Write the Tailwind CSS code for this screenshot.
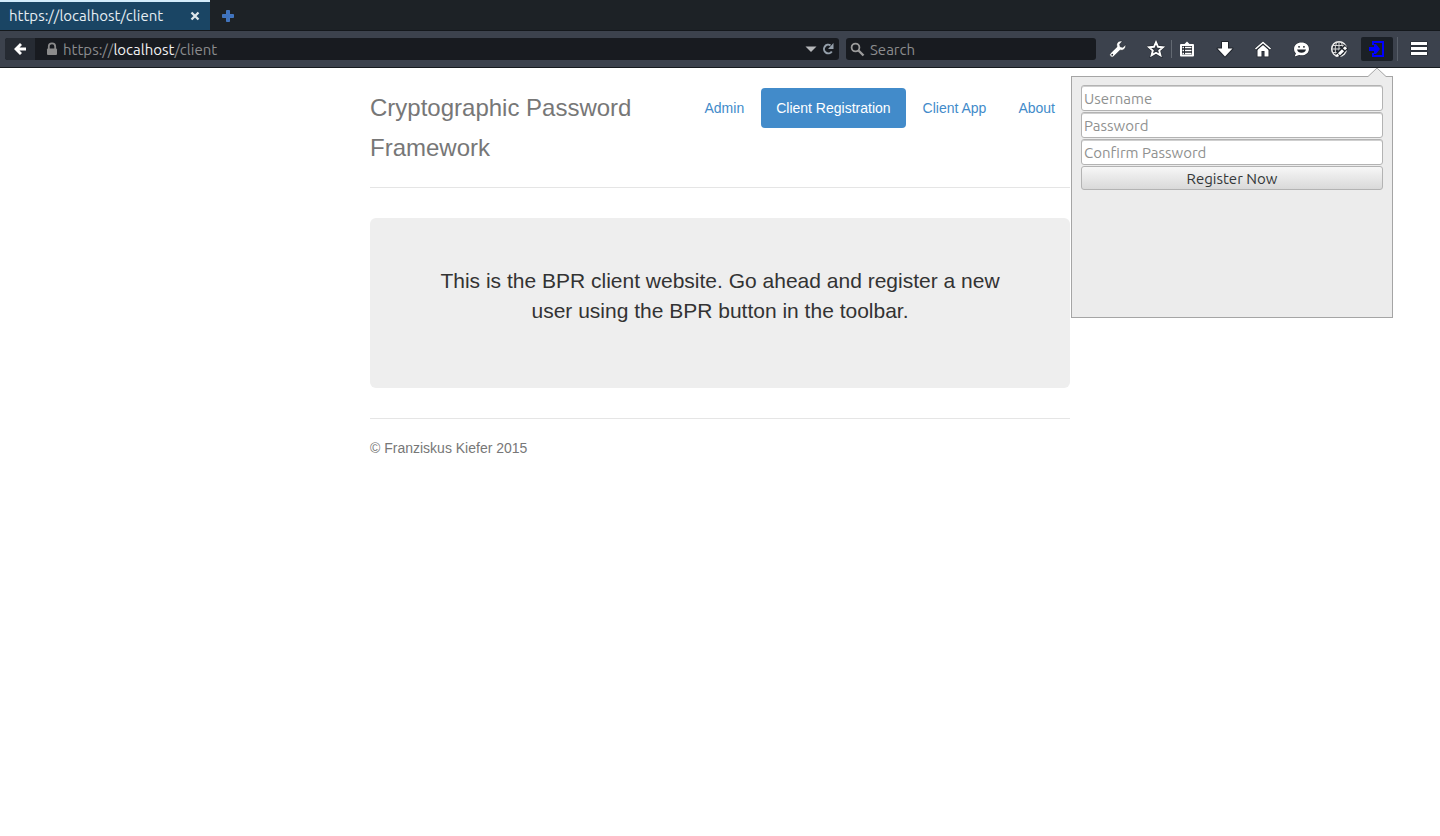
<!DOCTYPE html>
<html lang="en">
<head>
<meta charset="utf-8">
<meta name="viewport" content="width=device-width, initial-scale=1">
<title>Cryptographic Password Framework</title>
<script src="https://cdn.jsdelivr.net/npm/@tailwindcss/browser@4"></script>
</head>
<body class="min-h-screen bg-white font-['Liberation_Sans',Arial,sans-serif] text-sm text-[#333333]">
<div class="relative font-['Ubuntu','Noto_Sans',sans-serif] text-[15px]">
  <!-- Tab strip -->
  <div class="flex h-[31px] border-b border-[#14181c] bg-[#1d2226]">
    <div class="flex w-[210px] items-center justify-between border-t-2 border-[#d3ecfb] bg-[#1a4564] pr-[7px] pl-[9px] text-[#e6eef3]">
      <span>https://localhost/client</span>
      <button aria-label="Close tab" class="flex size-4 items-center justify-center">
        <svg class="size-3" viewBox="0 0 12 12"><path d="M2.500 2.500L9.500 9.500M9.500 2.500L2.500 9.500" stroke="#dce5ea" stroke-width="2.300"/></svg>
      </button>
    </div>
    <button aria-label="New tab" class="flex w-9 items-center justify-center pt-px">
      <svg class="size-4" viewBox="0 0 16 16"><path d="M6.500 2.500h3v4h4v3h-4v4h-3v-4h-4v-3h4z" fill="#3d73c0" stroke="#4a82d0" stroke-width=".8"/></svg>
    </button>
  </div>
  <!-- Navigation bar -->
  <div class="flex h-[37px] items-center border-b border-[#171b1f] bg-[#3c424d] pl-[5px]">
    <div class="flex h-[22px] min-w-0 grow items-center overflow-hidden rounded-[3px] bg-[#181b20]">
      <button aria-label="Back" class="flex h-full w-[30px] shrink-0 items-center justify-center bg-[#262b33]">
        <svg class="size-4" viewBox="0 0 16 16"><path d="M2 8l6-6 2 2-2.500 2.500H14v3H7.500L10 12l-2 2z" fill="#fff"/></svg>
      </button>
      <svg class="mr-1 ml-[10px] size-[14px] shrink-0" viewBox="0 0 14 14"><path d="M3.800 7V4.500a3.200 3.200 0 0 1 6.400 0V7" fill="none" stroke="#8b8b8b" stroke-width="1.800"/><rect x="2" y="6.500" width="10" height="6.500" rx="1" fill="#8b8b8b"/></svg>
      <div class="grow pt-0.5 text-[#8b8c8e]">https://<span class="text-[#f2f2f2]">localhost</span>/client</div>
      <button aria-label="Show history" class="flex w-[14px] justify-center"><svg class="h-[6px] w-3" viewBox="0 0 12 6"><path d="M.500 .500h11L6 6z" fill="#b6b8ba"/></svg></button>
      <button aria-label="Reload" class="mr-1 ml-[3px]"><svg class="size-[14px]" viewBox="0 0 14 14"><path d="M9.500 3.300A4.300 4.300 0 1 0 10.800 9.500" fill="none" stroke="#95a0ab" stroke-width="2"/><path d="M12.500 1v6H7z" fill="#95a0ab"/></svg></button>
    </div>
    <label class="ml-[7px] flex h-[22px] w-[250px] shrink-0 items-center rounded-[3px] bg-[#181b20] pl-1">
      <svg class="mr-[5px] size-[15px] shrink-0" viewBox="0 0 15 15" fill="none" stroke="#9b9b9b"><circle cx="5.500" cy="5.500" r="3.900" stroke-width="1.800"/><path d="M8.500 8.500l5 5" stroke-width="2.400"/></svg>
      <input type="search" aria-label="Search" placeholder="Search" class="w-full bg-transparent pt-0.5 text-white outline-none placeholder:text-[#8b8c8e]">
    </label>
    <div class="ml-[3px] flex h-6 shrink-0 items-center">
      <button aria-label="Developer tools" class="flex w-[38px] justify-center"><svg class="size-[18px]" viewBox="0 0 16 16"><path d="M14.800 4.200L12.300 6.500 10 6l-.500-2.300L11.800 1.200C9.500.300 7 1.700 6.800 4.200c0 .700.100 1.300.300 1.800L1.300 11.700a1.900 1.900 0 0 0 2.900 2.900L9.900 9c2.800.900 5.600-1.800 4.900-4.800z" fill="#fff" stroke="#20252c" stroke-width=".6"/><circle cx="2.900" cy="13" r=".8" fill="#20252c"/></svg></button>
      <button aria-label="Bookmark this page" class="ml-1 flex w-[30px] justify-center"><svg class="size-[18px]" viewBox="0 0 18 18"><path d="M9 2.200l2 4.600 5 .400-3.800 3.300 1.200 4.900L9 12.800l-4.400 2.600 1.200-4.900L2 7.200l5-.400z" fill="none" stroke="#20252c" stroke-width="3"/><path d="M9 2.200l2 4.600 5 .400-3.800 3.300 1.200 4.900L9 12.800l-4.400 2.600 1.200-4.900L2 7.200l5-.400z" fill="none" stroke="#fff" stroke-width="1.900"/></svg></button>
      <span class="h-[18px] w-px bg-[#636972]"></span>
      <button aria-label="Bookmarks" class="flex w-[30px] justify-center"><svg class="size-4" viewBox="0 0 16 16"><path d="M1 4a1 1 0 0 1 1-1h3.500L8 .500 10.500 3H14a1 1 0 0 1 1 1v10.500a1 1 0 0 1-1 1H2a1 1 0 0 1-1-1z" fill="#fff"/><path d="M3 5h10v8.500H3z" fill="#20252c"/><path d="M3.500 6.500h1.500M6 6.500h6.500M3.500 9.500h1.500M6 9.500h6.500M3.500 12.500h1.500M6 12.500h6.500" stroke="#fff" stroke-width="1.400"/></svg></button>
      <button aria-label="Downloads" class="ml-1 flex w-[38px] justify-center"><svg class="size-[18px]" viewBox="0 0 18 18"><path d="M6 2h6v6.500h4.500L9 16.500 1.500 8.500H6z" fill="#fff" stroke="#20252c" stroke-width="2" stroke-linejoin="round" paint-order="stroke"/></svg></button>
      <button aria-label="Home" class="flex w-[38px] justify-center"><svg class="size-[18px]" viewBox="0 0 18 18"><path d="M3.500 9L9 4.500 14.500 9v7.500h-4V11h-3v5.500h-4z" fill="#fff" stroke="#20252c" stroke-width="1.500" paint-order="stroke"/><path d="M1.500 9.500L9 3l7.500 6.500" fill="none" stroke="#20252c" stroke-width="3"/><path d="M1.500 9L9 2.500 16.500 9" fill="none" stroke="#fff" stroke-width="1.600"/></svg></button>
      <button aria-label="Hello" class="flex w-[38px] justify-center"><svg class="size-[17px]" viewBox="0 0 16 16"><path d="M8 1.500c4 0 7 2.400 7 6s-3 6-7 6c-.800 0-1.500-.100-2.200-.300L1.500 14.500l1.300-3C1.600 10.500 1 9.200 1 7.500c0-3.600 3-6 7-6z" fill="#fff" stroke="#20252c" stroke-width="1" paint-order="stroke"/><circle cx="5.700" cy="5.500" r=".9" fill="#20252c"/><circle cx="10.300" cy="5.500" r=".9" fill="#20252c"/><path d="M3.800 8h8.400c-.500 2-2 3-4.200 3S4.300 10 3.800 8z" fill="#20252c"/></svg></button>
      <button aria-label="Web editor" class="flex w-[38px] justify-center"><svg class="size-[18px]" viewBox="0 0 18 18" fill="none"><circle cx="9" cy="9" r="7.300" fill="#272c34" stroke="#f0f0f0" stroke-width="1.500"/><path d="M9 1.500v15M1.500 9h15M2.500 5.500h13M2.500 12.500h13" stroke="#d8d8d8"/><ellipse cx="9" cy="9" rx="3.800" ry="7.500" stroke="#d8d8d8"/><path d="M7.500 15.500l9-9" stroke="#20252c" stroke-width="5.500"/><path d="M9 14.200L13 10.200M14 9.200l2-2" stroke="#fff" stroke-width="3"/><path d="M5.500 17l1.700-3.500 2 2z" fill="#fff"/></svg></button>
      <button aria-label="BPR" class="ml-[3px] flex h-6 w-8 items-center justify-center rounded-[2px] bg-[#1b2026]"><svg class="size-4" viewBox="0 0 16 16"><path d="M3 4V0h12v16H3v-4h2v2h8V2H5v2z" fill="#00f"/><path d="M0 6h5V3h2l4 5-4 5H5v-3H0z" fill="#00f"/></svg></button>
      <span class="ml-1 h-6 w-px bg-[#59606a]"></span>
      <button aria-label="Open menu" class="flex w-[42px] justify-center"><svg class="size-[18px]" viewBox="0 0 18 18"><path d="M1 2h16v3H1zm0 5h16v3H1zm0 5h16v3H1z" fill="#fff" stroke="#20252c" stroke-width="1.200" stroke-linejoin="round" paint-order="stroke"/></svg></button>
    </div>
  </div>
  <!-- Registration popup -->
  <form class="absolute top-[76px] right-[47px] h-[242px] w-[322px] border border-[#a5a5a5] bg-[#ececec] px-[9px] pt-2">
    <svg class="absolute -top-[10px] right-[5px] h-[10px] w-5" viewBox="0 0 20 10"><path d="M0 10L10 1l10 9z" fill="#ececec"/><path d="M0 9.500h1L10 1l9 8.500h1" fill="none" stroke="#a5a5a5"/></svg>
    <div class="flex flex-col gap-px">
      <input type="text" aria-label="Username" placeholder="Username" class="h-[26px] rounded-[3px] border border-[#b3b3b3] bg-white px-0.5 shadow-[inset_0_1px_0_#cfcfcf] outline-none placeholder:text-[#8f9190]">
      <input type="password" aria-label="Password" placeholder="Password" class="h-[26px] rounded-[3px] border border-[#b3b3b3] bg-white px-0.5 shadow-[inset_0_1px_0_#cfcfcf] outline-none placeholder:text-[#8f9190]">
      <input type="password" aria-label="Confirm Password" placeholder="Confirm Password" class="h-[26px] rounded-[3px] border border-[#b3b3b3] bg-white px-0.5 shadow-[inset_0_1px_0_#cfcfcf] outline-none placeholder:text-[#8f9190]">
      <button type="button" class="flex h-6 items-center justify-center rounded-[3px] border border-[#b3b3b3] bg-linear-to-b from-[#f7f7f7] to-[#d9d9d9] pt-0.5 text-[#333738]">Register Now</button>
    </div>
  </form>
</div>
<!-- Page content -->
<div class="mx-auto max-w-[700px] pt-5">
  <header class="mb-[30px] flex items-start justify-between border-b border-[#e5e5e5] pb-[19px]">
    <h3 class="max-w-[300px] text-2xl leading-10 text-[#777777]">Cryptographic Password Framework</h3>
    <nav class="flex gap-0.5 leading-5 text-[#428bca]">
      <a href="#" class="px-[15px] py-[10px]">Admin</a>
      <a href="#" class="rounded bg-[#428bca] px-[15px] py-[10px] text-white">Client Registration</a>
      <a href="#" class="px-[15px] py-[10px]">Client App</a>
      <a href="#" class="px-[15px] py-[10px]">About</a>
    </nav>
  </header>
  <main class="rounded-md bg-[#eeeeee] px-[60px] pt-12 pb-[62px] text-center">
    <p class="text-[21px] leading-[30px]">This is the BPR client website. Go ahead and register a new user using the BPR button in the toolbar.</p>
  </main>
  <footer class="mt-[30px] border-t border-[#e5e5e5] pt-[19px] leading-5 text-[#777777]">© Franziskus Kiefer 2015</footer>
</div>
</body>
</html>
